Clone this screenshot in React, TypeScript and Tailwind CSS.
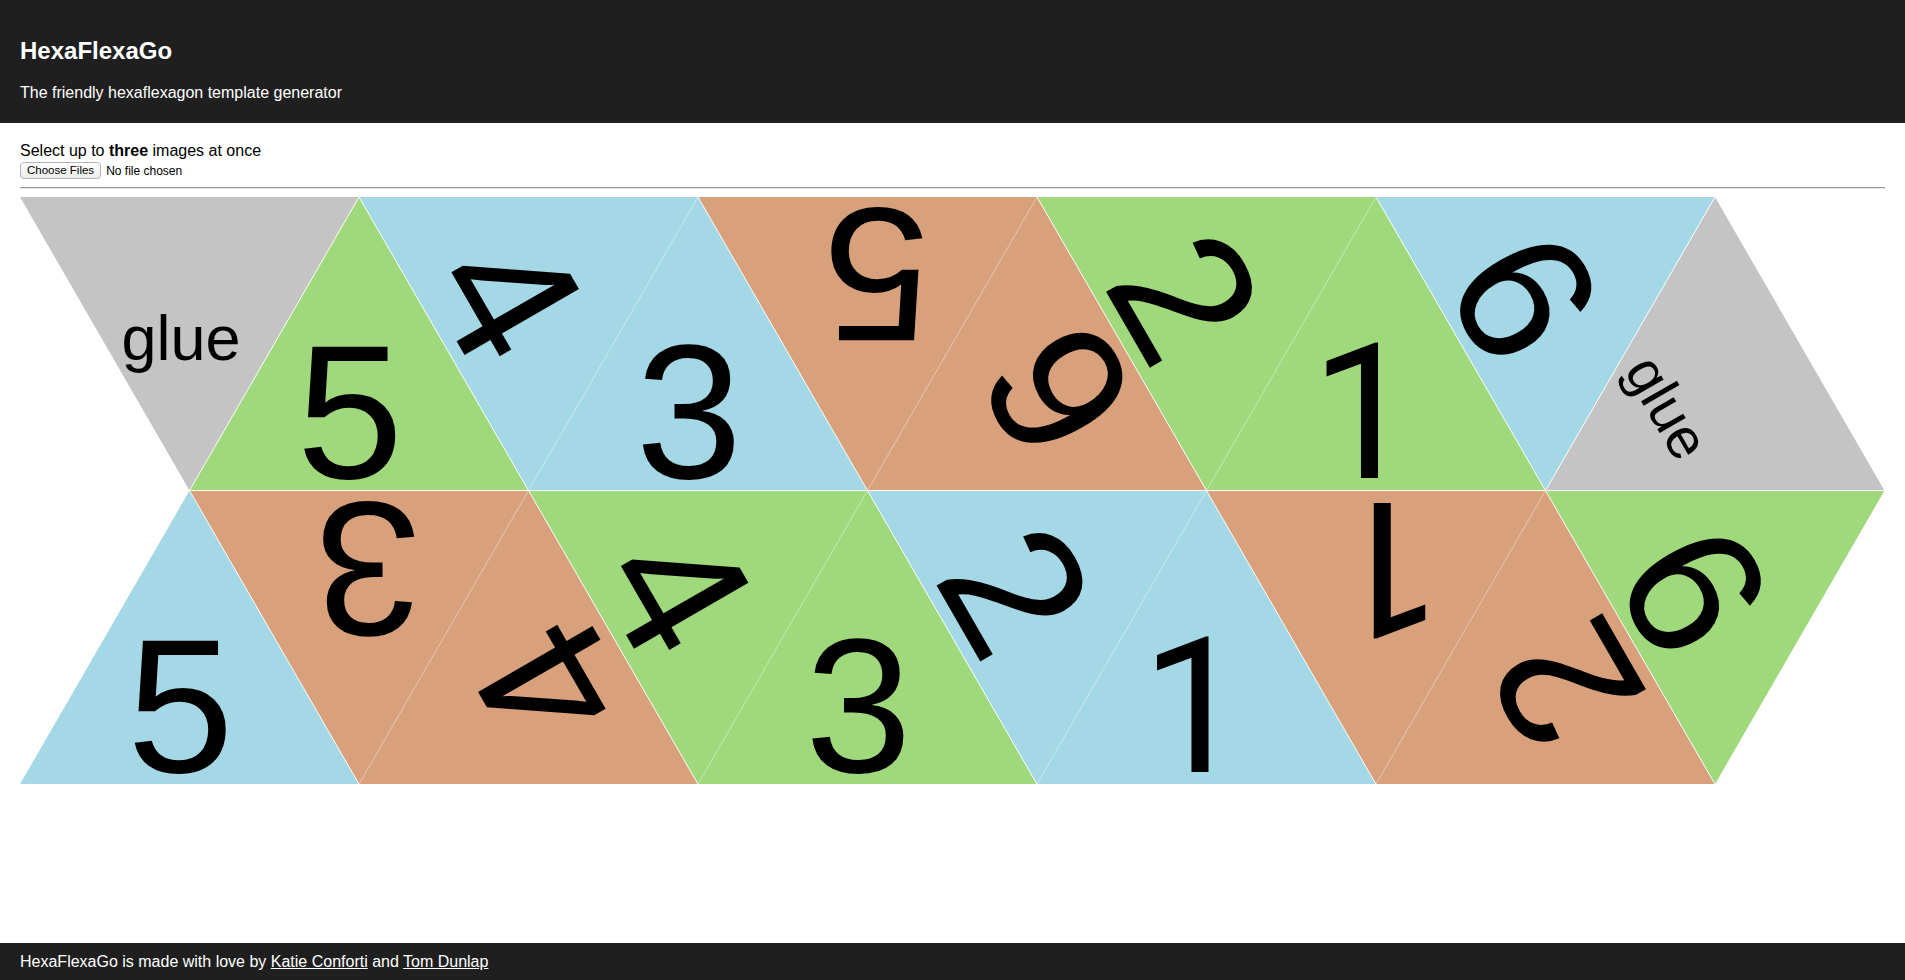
import React from "react";

// strip geometry
const S = 339;
const H = (S * Math.sqrt(3)) / 2;
const W = S * 5.5;

const GRAY = "#c4c4c4";
const GREEN = "#a0d97c";
const BLUE = "#a5d8e6";
const ORANGE = "#d8a07b";

type Tri = { color: string; label: string; rot: number };

const topRow: Tri[] = [
  { color: GRAY, label: "glue", rot: 0 },
  { color: GREEN, label: "5", rot: 0 },
  { color: BLUE, label: "4", rot: 60 },
  { color: BLUE, label: "3", rot: 0 },
  { color: ORANGE, label: "5", rot: 180 },
  { color: ORANGE, label: "6", rot: -120 },
  { color: GREEN, label: "2", rot: 60 },
  { color: GREEN, label: "1", rot: 0 },
  { color: BLUE, label: "6", rot: 60 },
  { color: GRAY, label: "glue", rot: 60 },
];

const bottomRow: Tri[] = [
  { color: BLUE, label: "5", rot: 0 },
  { color: ORANGE, label: "3", rot: 180 },
  { color: ORANGE, label: "4", rot: -120 },
  { color: GREEN, label: "4", rot: 60 },
  { color: GREEN, label: "3", rot: 0 },
  { color: BLUE, label: "2", rot: 60 },
  { color: BLUE, label: "1", rot: 0 },
  { color: ORANGE, label: "1", rot: 180 },
  { color: ORANGE, label: "2", rot: -120 },
  { color: GREEN, label: "6", rot: 60 },
];

type Pt = [number, number];

function triPoints(row: number, i: number): Pt[] {
  const xL = (i * S) / 2;
  const y0 = row * H;
  const y1 = y0 + H;
  const upright = row === 0 ? i % 2 === 1 : i % 2 === 0;
  return upright
    ? [
        [xL, y1],
        [xL + S / 2, y0],
        [xL + S, y1],
      ]
    : [
        [xL, y0],
        [xL + S, y0],
        [xL + S / 2, y1],
      ];
}

const cells = [
  ...topRow.map((t, i) => ({ ...t, row: 0, i, pts: triPoints(0, i) })),
  ...bottomRow.map((t, i) => ({ ...t, row: 1, i, pts: triPoints(1, i) })),
];

const same = (a: Pt, b: Pt) => Math.abs(a[0] - b[0]) < 0.5 && Math.abs(a[1] - b[1]) < 0.5;

// edges shared by two triangles
const seams: { a: Pt; b: Pt; diff: boolean }[] = [];
for (let m = 0; m < cells.length; m++) {
  for (let n = m + 1; n < cells.length; n++) {
    const shared = cells[m].pts.filter((p) => cells[n].pts.some((q) => same(p, q)));
    if (shared.length === 2) {
      seams.push({ a: shared[0], b: shared[1], diff: cells[m].color !== cells[n].color });
    }
  }
}

function Strip() {
  return (
    <svg width={W} height={H * 2} viewBox={`0 0 ${W} ${H * 2}`} className="block">
      {cells.map((c, k) => (
        <polygon key={k} points={c.pts.map((p) => p.join(",")).join(" ")} fill={c.color} />
      ))}
      {seams.map((e, k) => (
        <line
          key={k}
          x1={e.a[0]}
          y1={e.a[1]}
          x2={e.b[0]}
          y2={e.b[1]}
          stroke="#fff"
          strokeWidth={e.diff ? 1 : 0.8}
          strokeOpacity={e.diff ? 0.9 : 0.35}
        />
      ))}
      {cells.map((c, k) => {
        const cx = (c.pts[0][0] + c.pts[1][0] + c.pts[2][0]) / 3;
        const cy = (c.pts[0][1] + c.pts[1][1] + c.pts[2][1]) / 3;
        if (c.label === "glue") {
          if (c.i === 0) {
            return (
              <text key={k} x={161} y={163} textAnchor="middle" fontSize={63} fill="#000">
                glue
              </text>
            );
          }
          const gx = 1643;
          const gy = 213;
          return (
            <text
              key={k}
              x={gx}
              y={gy + 14.5}
              textAnchor="middle"
              fontSize={57}
              fill="#000"
              transform={`rotate(60 ${gx} ${gy})`}
            >
              glue
            </text>
          );
        }
        // the "1" of Liberation Sans has a foot; Roboto's matches the reference better
        const isOne = c.label === "1";
        return (
          <text
            key={k}
            x={cx - (isOne ? 12 : 9)}
            y={cy + 85.5}
            textAnchor="middle"
            fontSize={isOne ? 189 : 192}
            fontFamily={isOne ? "Roboto, 'Liberation Sans', sans-serif" : undefined}
            fill="#000"
            transform={`rotate(${c.rot} ${cx} ${cy})`}
          >
            {c.label}
          </text>
        );
      })}
    </svg>
  );
}

export default function App() {
  return (
    <div className="min-h-screen flex flex-col bg-white text-black font-['Liberation_Sans',Arial,sans-serif]">
      {/* Header */}
      <header className="bg-[#1f1f1f] text-white px-5 pt-[37px] pb-[21px]">
        <h1 className="text-[24px] leading-[28px] font-bold">HexaFlexaGo</h1>
        <p className="mt-[19px] text-[16px] leading-[18px]">The friendly hexaflexagon template generator</p>
      </header>

      <main className="px-5 pt-[19px]">
        <p className="text-[16px] leading-[18px]">
          Select up to <b>three</b> images at once
        </p>
        <div className="mt-[2px] flex h-[17px] items-center gap-[5px]">
          <button className="flex h-[17px] items-center rounded-[4px] border border-[#b3b3b3] bg-gradient-to-b from-white to-[#ededed] px-[6px] text-[11.5px] leading-none text-black">
            Choose Files
          </button>
          <span className="text-[12px] leading-none">No file chosen</span>
        </div>
        <hr className="mt-[8px] border-0 border-t border-b border-t-[#9a9a9a] border-b-[#e6e6e6]" />
        <div className="mt-[8px]">
          <Strip />
        </div>
      </main>

      {/* Footer */}
      <footer className="mt-auto flex h-[37px] items-center bg-[#1f1f1f] px-5 text-[16px] leading-[18px] text-white">
        <span>
          HexaFlexaGo is made with love by{" "}
          <a href="#" className="underline">
            Katie Conforti
          </a>{" "}
          and{" "}
          <a href="#" className="underline">
            Tom Dunlap
          </a>
        </span>
      </footer>
    </div>
  );
}
